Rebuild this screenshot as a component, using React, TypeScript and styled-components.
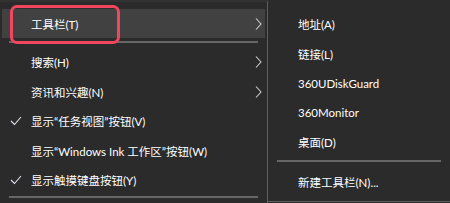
import React from "react";
import styled, { createGlobalStyle } from "styled-components";

const Global = createGlobalStyle`
  html, body { margin: 0; padding: 0; background: #2b2b2b; overflow: hidden; }
  body { font-family: "Lato", "Noto Sans CJK SC", sans-serif; }
`;

const Stage = styled.div`
  display: flex;
  width: 450px;
  height: 203px;
  background: #2b2b2b;
  overflow: hidden;
`;

const MainMenu = styled.div`
  position: relative;
  width: 268px;
  flex: none;
  box-sizing: border-box;
  border-top: 2px solid #323232;
  padding: 6.75px 2px 0;
  border-right: 1px solid #5e5e5e;
  height: 220px;
`;

const SubMenu = styled.div`
  flex: 1;
  height: 202px;
  box-sizing: border-box;
  padding-top: 9.25px;
  border-bottom: 1px solid #5e5e5e;
`;

const Row = styled.div<{ $hover?: boolean; $indent: number }>`
  height: 29.5px;
  display: flex;
  align-items: center;
  position: relative;
  padding-left: ${(p) => p.$indent}px;
  background: ${(p) => (p.$hover ? "#414141" : "transparent")};
  color: #ffffff;
  font-size: 11.5px;
  white-space: nowrap;
`;

const Sep = styled.div<{ $inset: string; $top: number; $bottom: number }>`
  height: 2px;
  margin: ${(p) => `${p.$top}px ${p.$inset} ${p.$bottom}px`};
  background: #666666;
`;

const Check = styled.svg`
  position: absolute;
  left: 8px;
  top: 50%;
  margin-top: -5px;
`;

const Chevron = styled.svg`
  position: absolute;
  right: 3px;
  top: 50%;
  margin-top: -6px;
`;

const Highlight = styled.div`
  position: absolute;
  left: 10px;
  top: 3px;
  width: 110px;
  height: 39px;
  box-sizing: border-box;
  border: 3px solid #f2465e;
  border-radius: 7px;
  pointer-events: none;
`;

const CheckIcon = () => (
  <Check width="12" height="10" viewBox="0 0 12 10">
    <path d="M1 5 L4.5 8.5 L11 1" fill="none" stroke="#dfe6f0" strokeWidth="1.1" />
  </Check>
);

const ChevronIcon = () => (
  <Chevron width="7" height="12" viewBox="0 0 7 12">
    <path d="M1 0.5 L6 6 L1 11.5" fill="none" stroke="#cfcfcf" strokeWidth="1.1" />
  </Chevron>
);

type Item = { label: string; check?: boolean; sub?: boolean; hover?: boolean };

const mainTop: Item[] = [{ label: "工具栏(T)", sub: true, hover: true }];
const mainRest: Item[] = [
  { label: "搜索(H)", sub: true },
  { label: "资讯和兴趣(N)", sub: true },
  { label: "显示“任务视图”按钮(V)", check: true },
  { label: "显示“Windows Ink 工作区”按钮(W)" },
  { label: "显示触摸键盘按钮(Y)", check: true },
];

const subTop = ["地址(A)", "链接(L)", "360UDiskGuard", "360Monitor", "桌面(D)"];

const MainRow = ({ item }: { item: Item }) => (
  <Row $hover={item.hover} $indent={29}>
    {item.check && <CheckIcon />}
    {item.label}
    {item.sub && <ChevronIcon />}
  </Row>
);

export default function App() {
  return (
    <>
      <Global />
      <Stage>
        <MainMenu>
          {mainTop.map((it) => (
            <MainRow key={it.label} item={it} />
          ))}
          <Sep $inset="7px" $top={3} $bottom={4} />
          {mainRest.map((it) => (
            <MainRow key={it.label} item={it} />
          ))}
          <Sep $inset="7px" $top={1} $bottom={0} />
          <Highlight />
        </MainMenu>
        <SubMenu>
          {subTop.map((l) => (
            <Row key={l} $indent={30}>
              {l}
            </Row>
          ))}
          <Sep $inset="9px" $top={3} $bottom={5} />
          <Row $indent={30}>新建工具栏(N)...</Row>
        </SubMenu>
      </Stage>
    </>
  );
}
